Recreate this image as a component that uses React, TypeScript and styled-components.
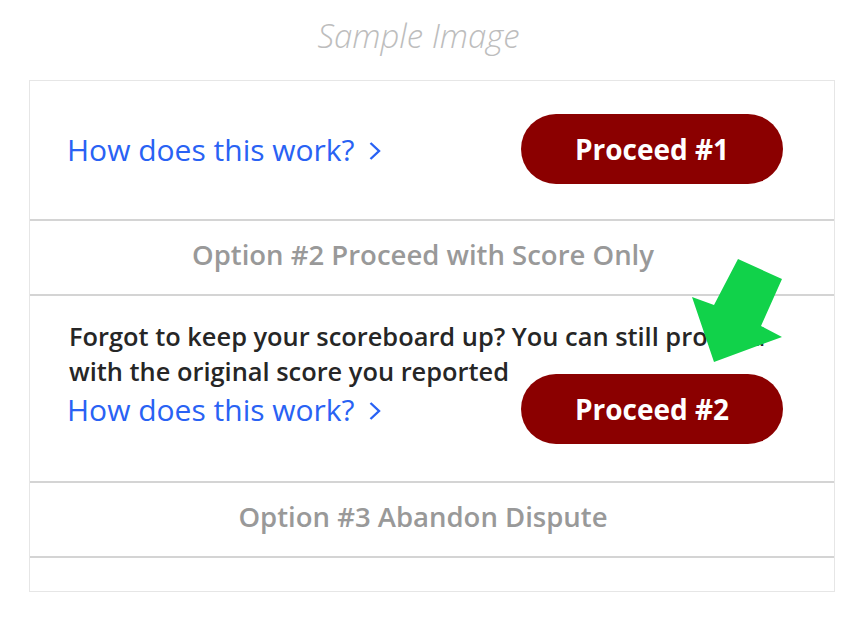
import React from "react";
import styled, { createGlobalStyle } from "styled-components";

const GlobalStyle = createGlobalStyle`
  html, body {
    margin: 0;
    padding: 0;
    background: #ffffff;
    font-family: "Open Sans", "Noto Sans", sans-serif;
  }
`;

const Page = styled.div`
  position: relative;
  width: 863px;
  height: 619px;
  padding: 0 28px 0 29px;
  box-sizing: border-box;
`;

const Title = styled.div`
  padding: 13px 27px 0 0;
  height: 80px;
  box-sizing: border-box;
  text-align: center;
  font-size: 33px;
  font-weight: 300;
  font-style: italic;
  color: #bdbdbd;
  line-height: 45px;
`;

const Card = styled.section`
  border: 1px solid #e6e6e6;
  display: flex;
  flex-direction: column;
`;

const Divider = styled.div`
  height: 2px;
  background: #d4d4d4;
`;

const ActionBlock = styled.div<{ $top: number; $bottom: number }>`
  position: relative;
  padding: ${(p) => p.$top}px 51px ${(p) => p.$bottom}px 37px;
`;

const Description = styled.p`
  margin: 0 0 0 2px;
  font-size: 25.4px;
  line-height: 34.7px;
  font-weight: 600;
  color: #262626;
`;

const ActionRow = styled.div<{ $overlap?: number }>`
  display: flex;
  align-items: center;
  justify-content: space-between;
  margin-top: ${(p) => (p.$overlap ? -p.$overlap : 0)}px;
`;

const HelpLink = styled.a`
  display: inline-flex;
  align-items: center;
  gap: 14px;
  font-size: 30px;
  font-weight: 400;
  color: #2962f4;
  text-decoration: none;
  cursor: pointer;
`;

const Chevron = styled.svg`
  width: 12px;
  height: 18px;
  margin-top: 4px;
`;

const ProceedButton = styled.button`
  width: 262px;
  height: 70px;
  border: none;
  border-radius: 35px;
  background: #8b0000;
  color: #ffffff;
  font-family: "Open Sans", "Noto Sans", sans-serif;
  font-size: 28px;
  font-weight: 700;
  cursor: pointer;
  padding: 0;
`;

const OptionHeader = styled.div`
  padding: 16px 53px 21px 35px;
  line-height: 36px;
  text-align: center;
  font-size: 27.5px;
  font-weight: 600;
  color: #999999;
`;

const Spacer = styled.div`
  height: 33px;
`;

const Arrow = styled.svg`
  position: absolute;
  left: 659px;
  top: -40px;
  width: 96px;
  height: 110px;
  z-index: 2;
`;

function Help() {
  return (
    <HelpLink>
      How does this work?
      <Chevron viewBox="0 0 12 18">
        <polyline
          points="1.5,1 10,9 1.5,17"
          fill="none"
          stroke="#2962f4"
          strokeWidth="2.4"
        />
      </Chevron>
    </HelpLink>
  );
}

export default function App() {
  return (
    <>
      <GlobalStyle />
      <Page>
        <Title>Sample Image</Title>
        <Card>
          <ActionBlock $top={33} $bottom={35}>
            <ActionRow>
              <Help />
              <ProceedButton>Proceed #1</ProceedButton>
            </ActionRow>
          </ActionBlock>
          <Divider />
          <OptionHeader>Option #2 Proceed with Score Only</OptionHeader>
          <Divider />
          <ActionBlock $top={23} $bottom={37}>
            <Description>
              Forgot to keep your scoreboard up? You can still proceed with the
              original score you reported
            </Description>
            <ActionRow $overlap={14}>
              <Help />
              <ProceedButton>Proceed #2</ProceedButton>
            </ActionRow>
            <Arrow viewBox="688 256 96 110">
              <polygon
                points="713,362 691,297 713,305 737,259 781,279 760,326 781,337"
                fill="#11d24a"
              />
            </Arrow>
          </ActionBlock>
          <Divider />
          <OptionHeader>Option #3 Abandon Dispute</OptionHeader>
          <Divider />
          <Spacer />
        </Card>
      </Page>
    </>
  );
}
